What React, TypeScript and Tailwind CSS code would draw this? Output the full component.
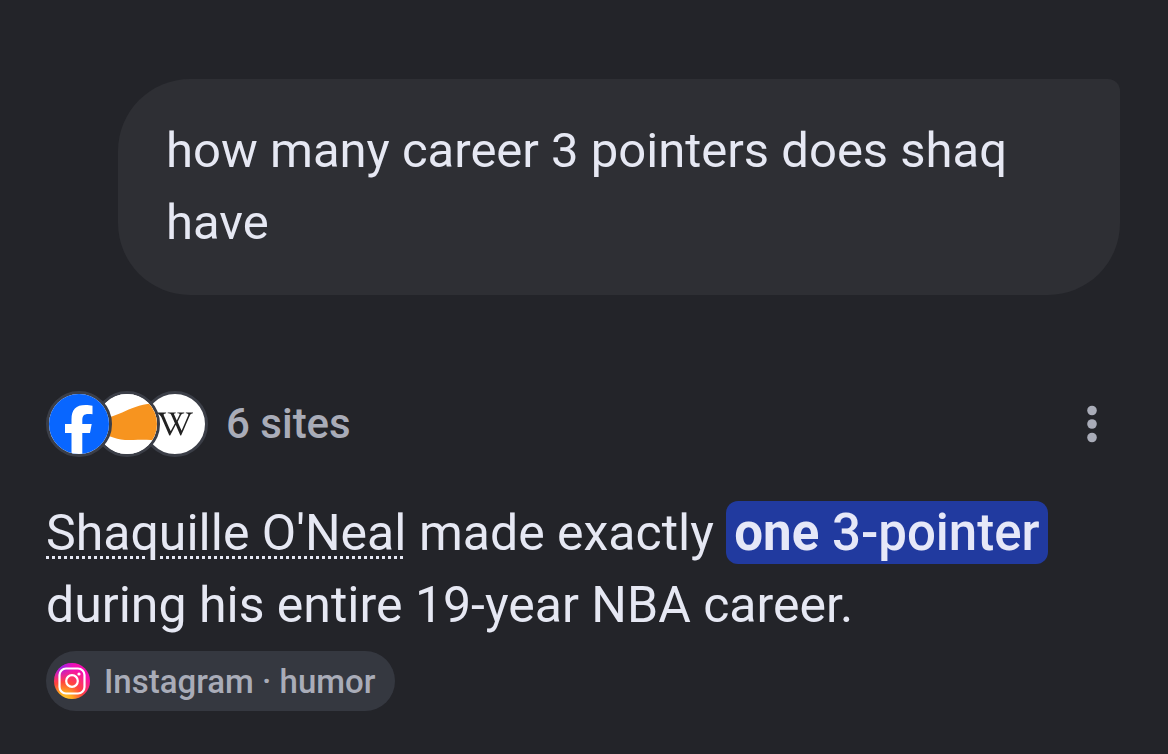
import React from 'react';
import { FaWikipediaW } from 'react-icons/fa';

const FacebookLogo: React.FC = () => (
  <svg viewBox="0 0 60 60" className="h-full w-full" aria-hidden="true">
    <rect width="60" height="60" fill="#0866ff" />
    <path
      d="M22.500 60V39H16v-9h6.500v-4.500C22.500 15.500 27 11 36.500 11c2.500 0 5 .3 7 .8v8.500c-1-.2-2.500-.3-4-.3-4.800 0-6.200 2-6.200 6.500V30h9.400L41 39h-7.700v21z"
      fill="#fff"
    />
  </svg>
);

const OrangeLogo: React.FC = () => (
  <svg viewBox="0 0 60 60" className="h-full w-full" aria-hidden="true">
    <rect width="60" height="60" fill="#fff" />
    <path d="M0 25C24 24 32 10 60 9v38c-6-2-22-1-32-1C16 45 12 40 0 40z" fill="#f7941f" />
  </svg>
);

const InstagramLogo: React.FC = () => (
  <svg viewBox="0 0 36 36" className="h-9 w-9 shrink-0" aria-hidden="true">
    <defs>
      <radialGradient id="ig-warm" cx="10" cy="38" r="34" gradientUnits="userSpaceOnUse">
        <stop offset="0" stopColor="#ffd53d" />
        <stop offset="0.25" stopColor="#ffab1e" />
        <stop offset="0.55" stopColor="#ff473c" />
        <stop offset="1" stopColor="#f50fb0" />
      </radialGradient>
      <radialGradient id="ig-cool" cx="5" cy="1" r="18" gradientUnits="userSpaceOnUse">
        <stop offset="0" stopColor="#6a2cff" />
        <stop offset="1" stopColor="#e010d0" stopOpacity="0" />
      </radialGradient>
    </defs>
    <circle cx="18" cy="18" r="18" fill="url(#ig-warm)" />
    <circle cx="18" cy="18" r="18" fill="url(#ig-cool)" />
    <g fill="none" stroke="#fff" strokeWidth="2.200">
      <rect x="5.500" y="5.500" width="25" height="25" rx="6.500" />
      <circle cx="18" cy="18" r="5.800" />
    </g>
    <circle cx="25" cy="11" r="1.600" fill="#fff" />
  </svg>
);

const SOURCES = [
  { name: 'Facebook', icon: <FacebookLogo /> },
  { name: 'Orange', icon: <OrangeLogo /> },
  { name: 'Wikipedia', icon: <FaWikipediaW className="h-9 w-9 text-[#222]" aria-hidden="true" /> },
];

function SitesRow() {
  return (
    <div className="flex items-center justify-between">
      <button type="button" className="flex items-center">
        <span className="flex -space-x-[18px]">
          {SOURCES.map((source, index) => (
            <span
              key={source.name}
              className="relative flex h-[66px] w-[66px] items-center justify-center overflow-hidden rounded-full border-3 border-[#3b3e47] bg-white"
              style={{ zIndex: SOURCES.length - index }}
            >
              {source.icon}
            </span>
          ))}
        </span>
        <span className="ml-[18px] text-[42px] leading-none font-medium text-[#a9acb8]">6 sites</span>
      </button>
      <button type="button" aria-label="More options" className="flex h-16 w-14 items-center justify-center">
        <svg viewBox="0 0 12 38" className="h-[38px] w-3" fill="#a9acb8" aria-hidden="true">
          <circle cx="6" cy="5.500" r="4.800" />
          <circle cx="6" cy="19" r="4.800" />
          <circle cx="6" cy="32.500" r="4.800" />
        </svg>
      </button>
    </div>
  );
}

export default function App() {
  return (
    <main className="min-h-screen bg-[#232429] px-12 pt-[79px] pb-10 font-[Roboto,sans-serif] text-[#e6e8f3]">
      <div className="ml-[70px] rounded-[72px] rounded-tr-xl bg-[#2e2f34] px-12 py-9 text-[49px] leading-[72px]">
        <p>how many career 3 pointers does shaq have</p>
      </div>

      <section className="-ml-0.5 pt-24">
        <SitesRow />
        <p className="mt-10 text-[50px] leading-[72px]">
          <a
            href="#shaq"
            className="underline decoration-dotted decoration-3 underline-offset-6"
          >
            Shaquille O'Neal
          </a>{' '}
          made exactly{' '}
          <mark className="rounded-xl bg-[#213a9f] px-2 py-0.5 text-[51px] font-medium text-[#e6e8f8]">
            <strong className="font-bold">one</strong> 3-pointer
          </mark>{' '}
          during his entire 19-year NBA career.
        </p>
        <a
          href="#instagram"
          className="mt-2.5 flex h-[60px] w-fit items-center gap-3.5 rounded-full bg-[#353840] pr-5 pl-2 text-[33px] leading-none font-medium text-[#a9acb8]"
        >
          <InstagramLogo />
          <span>Instagram · humor</span>
        </a>
      </section>
    </main>
  );
}
